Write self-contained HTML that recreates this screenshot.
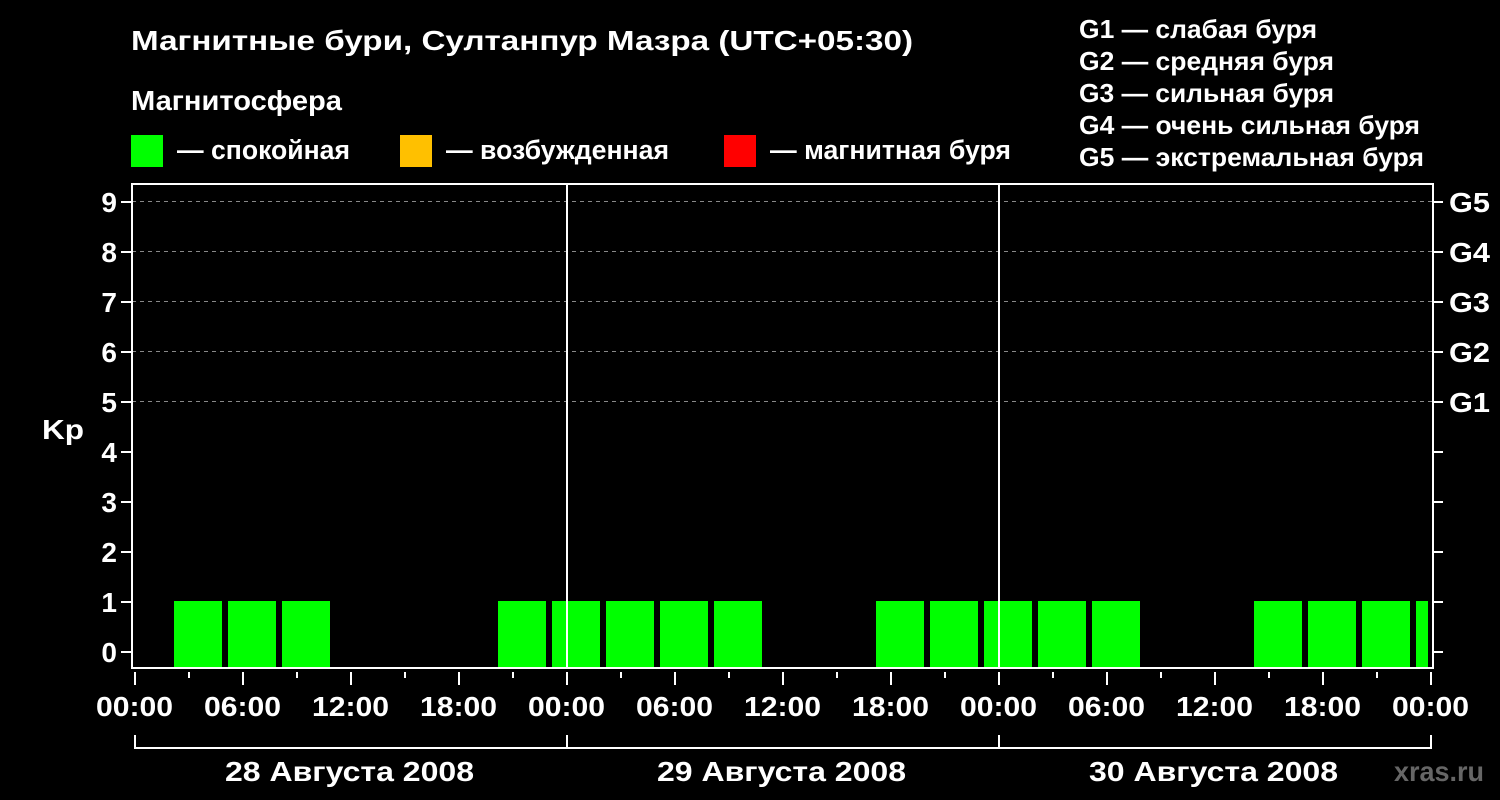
<!DOCTYPE html><html><head><meta charset="utf-8"><style>body{margin:0;background:#000}svg{display:block}text{font-family:"Liberation Sans",sans-serif;font-weight:bold;fill:#fff}</style></head><body>
<svg width="1500" height="800" xmlns="http://www.w3.org/2000/svg">
<rect width="1500" height="800" fill="#000"/>
<text x="131" y="50" font-size="28" textLength="782" lengthAdjust="spacingAndGlyphs">Магнитные бури, Султанпур Мазра (UTC+05:30)</text>
<text x="131" y="110" font-size="28" textLength="211" lengthAdjust="spacingAndGlyphs">Магнитосфера</text>
<rect x="131" y="135" width="32" height="32" fill="#00ff00"/><text x="177" y="159" font-size="27" textLength="173" lengthAdjust="spacingAndGlyphs">— спокойная</text>
<rect x="400" y="135" width="32" height="32" fill="#ffc000"/><text x="446" y="159" font-size="27" textLength="223" lengthAdjust="spacingAndGlyphs">— возбужденная</text>
<rect x="724" y="135" width="32" height="32" fill="#ff0000"/><text x="770" y="159" font-size="27" textLength="241" lengthAdjust="spacingAndGlyphs">— магнитная буря</text>
<g font-size="26"><text x="1079" y="38" textLength="238" lengthAdjust="spacingAndGlyphs">G1 — слабая буря</text><text x="1079" y="70" textLength="255" lengthAdjust="spacingAndGlyphs">G2 — средняя буря</text><text x="1079" y="102" textLength="255" lengthAdjust="spacingAndGlyphs">G3 — сильная буря</text><text x="1079" y="134" textLength="341" lengthAdjust="spacingAndGlyphs">G4 — очень сильная буря</text><text x="1079" y="166" textLength="345" lengthAdjust="spacingAndGlyphs">G5 — экстремальная буря</text></g>
<g stroke="#888" stroke-dasharray="4,4" stroke-width="1"><line x1="132" x2="1432" y1="201.5" y2="201.5"/><line x1="132" x2="1432" y1="251.5" y2="251.5"/><line x1="132" x2="1432" y1="301.5" y2="301.5"/><line x1="132" x2="1432" y1="351.5" y2="351.5"/><line x1="132" x2="1432" y1="401.5" y2="401.5"/></g>
<g fill="#00ff00">
<rect x="174" y="601" width="48" height="67"/><rect x="228" y="601" width="48" height="67"/><rect x="282" y="601" width="48" height="67"/>
<rect x="498" y="601" width="48" height="67"/><rect x="552" y="601" width="48" height="67"/><rect x="606" y="601" width="48" height="67"/><rect x="660" y="601" width="48" height="67"/><rect x="714" y="601" width="48" height="67"/>
<rect x="876" y="601" width="48" height="67"/><rect x="930" y="601" width="48" height="67"/><rect x="984" y="601" width="48" height="67"/><rect x="1038" y="601" width="48" height="67"/><rect x="1092" y="601" width="48" height="67"/>
<rect x="1254" y="601" width="48" height="67"/><rect x="1308" y="601" width="48" height="67"/><rect x="1362" y="601" width="48" height="67"/><rect x="1416" y="601" width="12" height="67"/>
</g>
<g stroke="#fff" stroke-width="2" fill="none">
<rect x="132" y="184" width="1301" height="484"/>
<line x1="567" y1="184" x2="567" y2="668"/><line x1="999" y1="184" x2="999" y2="668"/>
<path d="M121 202h11M121 252h11M121 302h11M121 352h11M121 402h11M121 452h11M121 502h11M121 552h11M121 602h11M121 652h11"/>
<path d="M1433 202h10M1433 252h10M1433 302h10M1433 352h10M1433 402h10M1433 452h10M1433 502h10M1433 552h10M1433 602h10M1433 652h10"/>
<path d="M135 672v13M189 672v6M243 672v13M297 672v6M351 672v13M405 672v6M459 672v13M513 672v6M567 672v13M621 672v6M675 672v13M729 672v6M783 672v13M837 672v6M891 672v13M945 672v6M999 672v13M1053 672v6M1107 672v13M1161 672v6M1215 672v13M1269 672v6M1323 672v13M1377 672v6M1431 672v13"/>
<path d="M135 735v13h1296v-13M567 735v13M999 735v13"/>
</g>
<g font-size="28" text-anchor="end"><text x="117" y="212">9</text><text x="117" y="262">8</text><text x="117" y="312">7</text><text x="117" y="362">6</text><text x="117" y="412">5</text><text x="117" y="462">4</text><text x="117" y="512">3</text><text x="117" y="562">2</text><text x="117" y="612">1</text><text x="117" y="662">0</text></g>
<text x="42" y="439" font-size="28" textLength="42" lengthAdjust="spacingAndGlyphs">Kp</text>
<g font-size="28"><text x="1449" y="212" textLength="41" lengthAdjust="spacingAndGlyphs">G5</text><text x="1449" y="262" textLength="41" lengthAdjust="spacingAndGlyphs">G4</text><text x="1449" y="312" textLength="41" lengthAdjust="spacingAndGlyphs">G3</text><text x="1449" y="362" textLength="41" lengthAdjust="spacingAndGlyphs">G2</text><text x="1449" y="412" textLength="41" lengthAdjust="spacingAndGlyphs">G1</text></g>
<g font-size="28"><text x="96" y="716" textLength="77" lengthAdjust="spacingAndGlyphs">00:00</text><text x="204" y="716" textLength="77" lengthAdjust="spacingAndGlyphs">06:00</text><text x="312" y="716" textLength="77" lengthAdjust="spacingAndGlyphs">12:00</text><text x="420" y="716" textLength="77" lengthAdjust="spacingAndGlyphs">18:00</text><text x="528" y="716" textLength="77" lengthAdjust="spacingAndGlyphs">00:00</text><text x="636" y="716" textLength="77" lengthAdjust="spacingAndGlyphs">06:00</text><text x="744" y="716" textLength="77" lengthAdjust="spacingAndGlyphs">12:00</text><text x="852" y="716" textLength="77" lengthAdjust="spacingAndGlyphs">18:00</text><text x="960" y="716" textLength="77" lengthAdjust="spacingAndGlyphs">00:00</text><text x="1068" y="716" textLength="77" lengthAdjust="spacingAndGlyphs">06:00</text><text x="1176" y="716" textLength="77" lengthAdjust="spacingAndGlyphs">12:00</text><text x="1284" y="716" textLength="77" lengthAdjust="spacingAndGlyphs">18:00</text><text x="1392" y="716" textLength="77" lengthAdjust="spacingAndGlyphs">00:00</text></g>
<g font-size="28"><text x="225" y="781" textLength="249" lengthAdjust="spacingAndGlyphs">28 Августа 2008</text><text x="657" y="781" textLength="249" lengthAdjust="spacingAndGlyphs">29 Августа 2008</text><text x="1089" y="781" textLength="249" lengthAdjust="spacingAndGlyphs">30 Августа 2008</text></g>
<text x="1394" y="781" font-size="28" textLength="90" lengthAdjust="spacingAndGlyphs" style="fill:#666">xras.ru</text>
</svg></body></html>
